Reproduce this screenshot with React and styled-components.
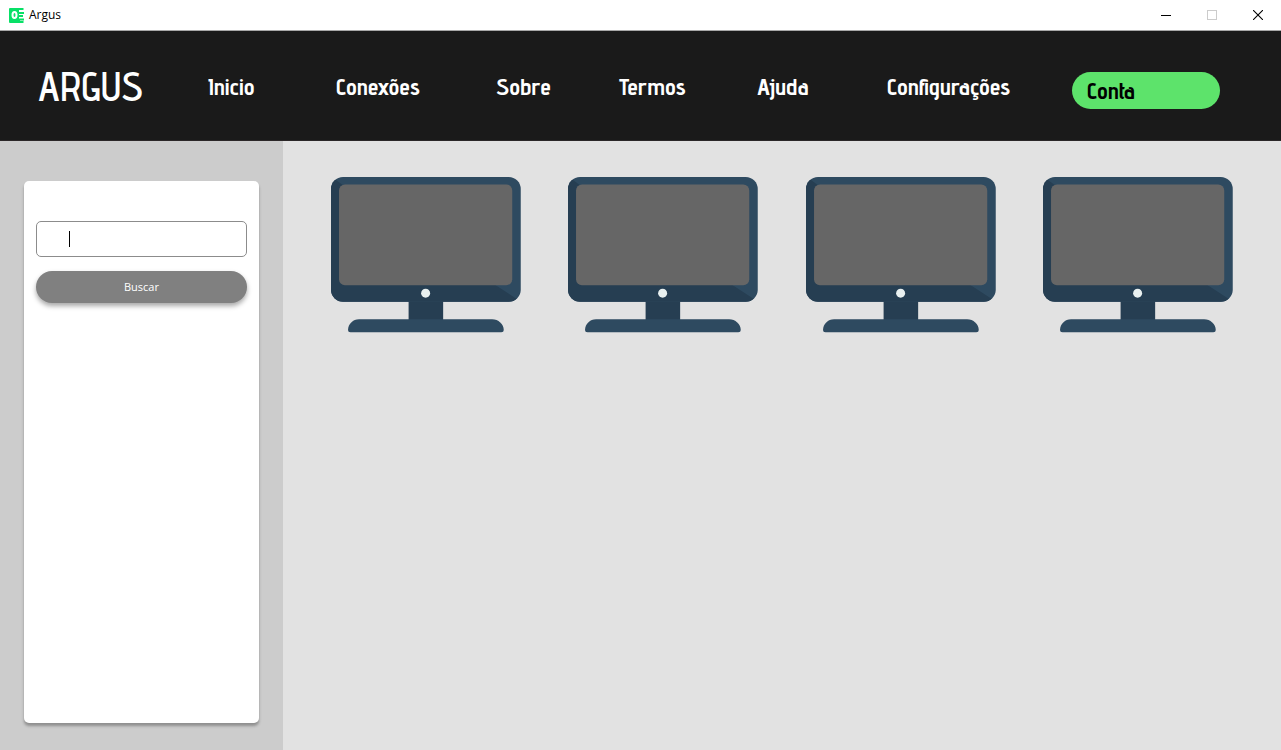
import React from "react";
import styled, { createGlobalStyle } from "styled-components";

const GlobalStyle = createGlobalStyle`
  *, *::before, *::after { box-sizing: border-box; }
  body { margin: 0; font-family: "Open Sans", "Noto Sans", sans-serif; }
`;

const Window = styled.div`
  display: flex;
  flex-direction: column;
  min-height: 100vh;
  background: #e2e2e2;
`;

const TitleBar = styled.div`
  display: flex;
  align-items: center;
  height: 31px;
  padding-left: 9px;
  background: #ffffff;
  border-bottom: 1px solid #a8a8a8;
`;

const AppIcon = styled.svg`
  width: 15px;
  height: 15px;
  margin-right: 5px;
`;

const WindowTitle = styled.span`
  flex: 1;
  font-size: 12px;
  line-height: 16px;
  color: #000000;
`;

const WindowButton = styled.button`
  display: flex;
  align-items: center;
  justify-content: center;
  width: 46px;
  height: 30px;
  padding: 0;
  border: 0;
  background: transparent;
  color: ${(p) => (p.disabled ? "#cccccc" : "#000000")};
`;

const Header = styled.header`
  display: grid;
  grid-template-columns: 170fr 128fr 160fr 123fr 138fr 130fr 185fr 148fr;
  align-items: center;
  height: 110px;
  padding: 2px 61px 0 38px;
  background: #1a1a1a;
  border-bottom: 1px solid #2b2728;
  font-family: "Advent Pro", "Roboto Condensed", Roboto, sans-serif;
  color: #ffffff;
`;

const Brand = styled.h1`
  margin: 0;
  font-size: 40px;
  line-height: 48px;
  font-weight: 600;
`;

const NavLink = styled.a`
  font-size: 24px;
  line-height: 32px;
  font-weight: 700;
  color: inherit;
  text-decoration: none;
`;

const AccountButton = styled.button`
  height: 37px;
  margin-top: 8px;
  padding: 0 15px;
  border: 0;
  border-radius: 19px;
  background: #5de36b;
  color: #000000;
  font-family: inherit;
  font-size: 24px;
  font-weight: 700;
  line-height: 32px;
  text-align: left;
`;

const Body = styled.div`
  display: flex;
  flex: 1;
`;

const Sidebar = styled.aside`
  display: flex;
  flex: 0 0 283px;
  padding: 40px 24px 27px;
  background: #cccccc;
`;

const SearchCard = styled.form`
  flex: 1;
  display: flex;
  flex-direction: column;
  gap: 14px;
  padding: 40px 12px;
  border-radius: 5px;
  background: #ffffff;
  box-shadow: 0 3px 3px rgba(0, 0, 0, 0.3);
`;

const SearchField = styled.label`
  position: relative;
  display: block;

  &::after {
    content: "";
    position: absolute;
    top: 10px;
    left: 33px;
    width: 1px;
    height: 16px;
    background: #000000;
  }
`;

const SearchInput = styled.input`
  display: block;
  width: 100%;
  height: 36px;
  padding: 0 12px 0 32px;
  border: 1px solid #8c8c8c;
  border-radius: 5px;
  background: #ffffff;
  font: 12px "Open Sans", sans-serif;
  caret-color: transparent;
  outline: none;
`;

const SearchButton = styled.button`
  height: 32px;
  border: 0;
  border-radius: 16px;
  background: #808080;
  box-shadow: 0 3px 5px rgba(0, 0, 0, 0.35);
  color: #ffffff;
  font-family: "Open Sans", sans-serif;
  font-size: 11px;
  line-height: 16px;
`;

const Devices = styled.main`
  flex: 1;
  display: grid;
  grid-template-columns: repeat(4, 1fr);
  align-content: start;
  gap: 47px;
  padding: 36px 48px;
`;

const MonitorDrawing = styled.svg`
  display: block;
  width: 100%;
`;

function Monitor({ id }) {
  const clip = `case-${id}`;
  return (
    <MonitorDrawing viewBox="0 0 190 156" role="img" aria-label={`Computador ${id}`}>
      <clipPath id={clip}>
        <rect width="189.500" height="124.500" rx="12" />
      </clipPath>
      <rect x="77.5" y="124" width="34.500" height="19" fill="#263e52" />
      <path d="M17 152.500 C17 147 22 142 28 142 H161 C167 142 172.500 147 172.500 152.500 Q172.500 155 170 155 H19.500 Q17 155 17 152.500Z" fill="#2e4a60" />
      <g clipPath={`url(#${clip})`}>
        <rect width="190" height="125" fill="#2e4a60" />
        <path d="M0 0 L5 3 L13 9 L163 107 L186 122 V125 H0Z" fill="#263e52" />
      </g>
      <rect x="8" y="7.500" width="173" height="100.500" rx="6" fill="#666666" />
      <circle cx="94.500" cy="116" r="4.500" fill="#e9f0f0" />
    </MonitorDrawing>
  );
}

const LINKS = ["Inicio", "Conexões", "Sobre", "Termos", "Ajuda", "Configurações"];

export default function App() {
  return (
    <Window>
      <GlobalStyle />
      <TitleBar>
        <AppIcon viewBox="0 0 15 15" aria-hidden="true">
          <path d="M1 0H14.500V2H10V4H15V6H10V7H14V9H10V10.500H15V12.500H11V13H14.500V15H1Q0 15 0 14V1Q0 0 1 0Z" fill="#08e067" />
          <ellipse cx="5.500" cy="7" rx="2" ry="2.900" fill="none" stroke="#ffffff" strokeWidth="2" />
        </AppIcon>
        <WindowTitle>Argus</WindowTitle>
        <WindowButton aria-label="Minimizar">
          <svg width="10" height="10" viewBox="0 0 10 10">
            <path d="M0 5.500H10" stroke="currentColor" />
          </svg>
        </WindowButton>
        <WindowButton aria-label="Maximizar" disabled>
          <svg width="10" height="10" viewBox="0 0 10 10">
            <rect x="0.500" y="0.500" width="9" height="9" fill="none" stroke="currentColor" />
          </svg>
        </WindowButton>
        <WindowButton aria-label="Fechar">
          <svg width="10" height="10" viewBox="0 0 10 10">
            <path d="M0 0L10 10M10 0L0 10" stroke="currentColor" strokeWidth="1.100" />
          </svg>
        </WindowButton>
      </TitleBar>
      <Header>
        <Brand>ARGUS</Brand>
        {LINKS.map((label) => (
          <NavLink key={label} href="#">{label}</NavLink>
        ))}
        <AccountButton>Conta</AccountButton>
      </Header>
      <Body>
        <Sidebar>
          <SearchCard onSubmit={(e) => e.preventDefault()}>
            <SearchField>
              <SearchInput type="text" aria-label="Buscar" />
            </SearchField>
            <SearchButton type="submit">Buscar</SearchButton>
          </SearchCard>
        </Sidebar>
        <Devices>
          {[1, 2, 3, 4].map((id) => (
            <Monitor key={id} id={id} />
          ))}
        </Devices>
      </Body>
    </Window>
  );
}
